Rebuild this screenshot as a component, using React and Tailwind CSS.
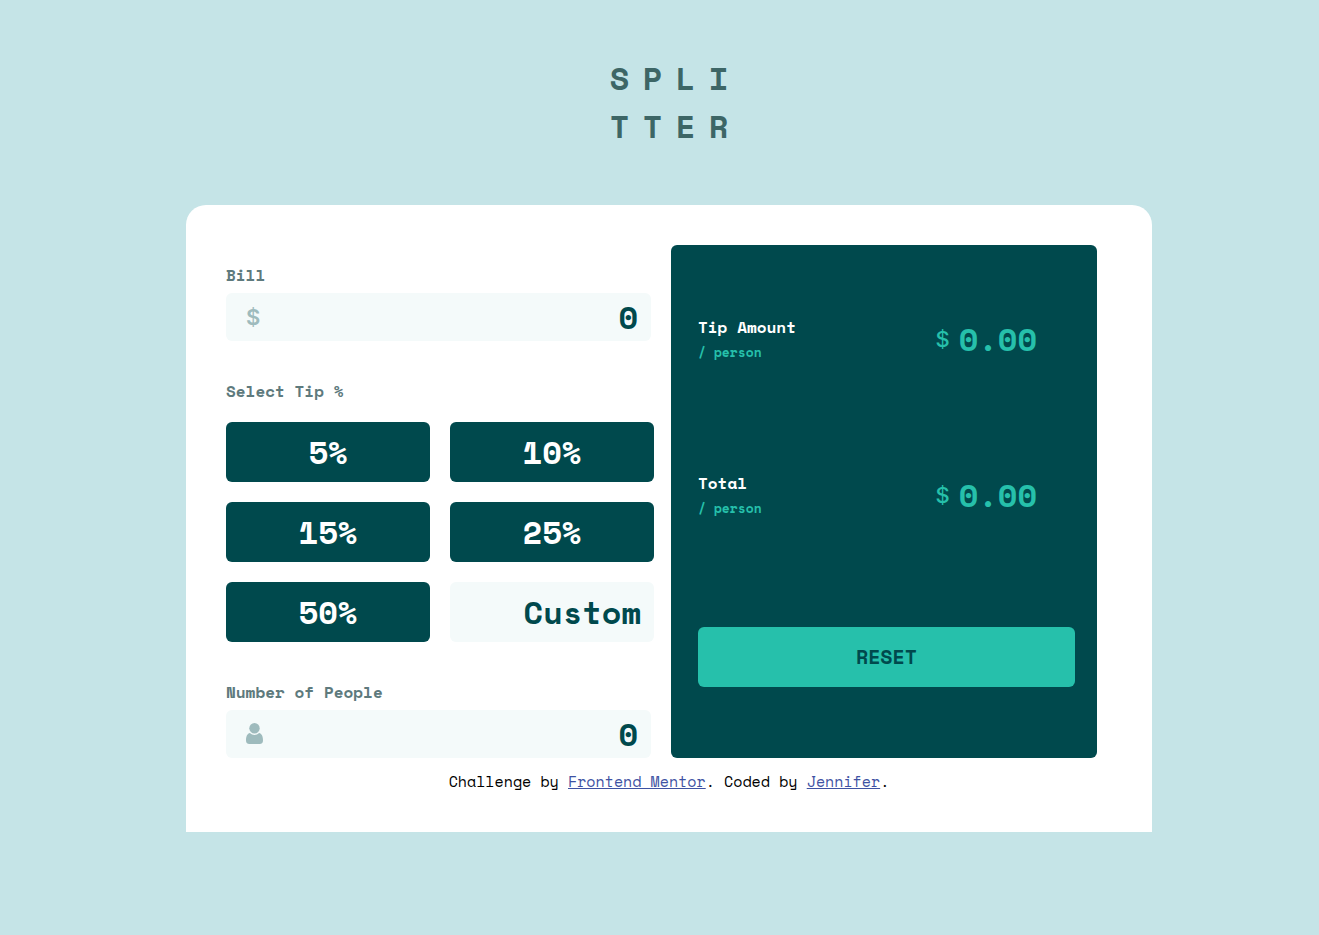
import { useState } from "react";

const TIPS = [5, 10, 15, 25, 50];

function PersonIcon() {
  return (
    <svg viewBox="0 0 17 22" className="h-[22px] w-[17px]" fill="#9ebbbd" aria-hidden="true">
      <circle cx="8.500" cy="5.200" r="5.200" />
      <path d="M3.900 10.100C5.200 11.400 6.800 12 8.500 12s3.300-.6 4.600-1.900C15.600 10.600 17 13.400 17 17.300c0 2.500-1 3.700-3.400 3.700H3.400C1 21 0 19.800 0 17.300c0-3.900 1.400-6.700 3.900-7.200Z" />
    </svg>
  );
}

function AmountField({ id, label, icon, value, onChange }) {
  return (
    <div className="flex flex-col gap-[6px] md:mr-[3px]">
      <label htmlFor={id} className="text-base leading-6 font-bold text-[#5e7a7d]">
        {label}
      </label>
      <div className="flex h-12 items-center rounded-md bg-[#f4fafa] pr-[13px] pl-5">
        {icon}
        <input
          id={id}
          type="text"
          inputMode="decimal"
          value={value}
          onChange={(e) => onChange(e.target.value)}
          className="h-12 min-w-0 flex-1 bg-transparent text-right text-[32px] font-bold text-[#00494d] outline-none"
        />
      </div>
    </div>
  );
}

function ResultRow({ title, amount }) {
  return (
    <div className="flex items-start justify-between pr-[38px]">
      <div>
        <h2 className="text-base leading-6 font-bold text-white">{title}</h2>
        <p className="text-[13px] leading-[27px] font-bold text-[#26c0ab]">/ person</p>
      </div>
      <p className="flex items-center gap-[9px] text-[#26c0ab]">
        <span className="font-['Inter',sans-serif] text-[22px] font-medium">$</span>
        <output className="text-[32px] leading-12 font-bold">{amount.toFixed(2)}</output>
      </p>
    </div>
  );
}

export default function App() {
  const [bill, setBill] = useState("0");
  const [people, setPeople] = useState("0");
  const [tip, setTip] = useState(0);
  const [custom, setCustom] = useState("");

  const count = Number(people) || 0;
  const total = Number(bill) || 0;
  const rate = (Number(custom) || tip) / 100;
  const tipEach = count > 0 ? (total * rate) / count : 0;
  const totalEach = count > 0 ? (total * (1 + rate)) / count : 0;

  const reset = () => {
    setBill("0");
    setPeople("0");
    setTip(0);
    setCustom("");
  };

  return (
    <div className="min-h-screen bg-[#c5e4e7] pt-[54px] pb-[103px] font-['Space_Mono','Liberation_Mono',monospace] md:pl-[19px]">
      <h1 className="mx-auto grid w-[132px] grid-cols-4 text-center text-[32px] leading-12 font-bold text-[#3d6666]">
        {[..."SPLITTER"].map((letter, i) => (
          <span key={i}>{letter}</span>
        ))}
      </h1>

      <main className="mx-auto mt-[55px] w-full max-w-[966px] rounded-t-[20px] bg-white px-6 pt-10 pb-[39px] md:pr-[55px] md:pl-10">
        <div className="grid gap-[17px] md:grid-cols-[428fr_426fr]">
          <section className="flex min-w-0 flex-col gap-[38px] pt-[18px]">
            <AmountField
              id="bill"
              label="Bill"
              value={bill}
              onChange={setBill}
              icon={<span className="font-['Inter',sans-serif] text-[22px] font-semibold text-[#9ebbbd]">$</span>}
            />

            <fieldset className="min-w-0">
              <legend className="text-base leading-6 font-bold text-[#5e7a7d]">Select Tip %</legend>
              <div className="mt-[19px] grid grid-cols-2 gap-5">
                {TIPS.map((value) => (
                  <button
                    key={value}
                    type="button"
                    onClick={() => {
                      setTip(value);
                      setCustom("");
                    }}
                    className="h-[60px] rounded-md bg-[#00494d] text-[32px] font-bold text-white hover:bg-[#26c0ab]"
                  >
                    {value}%
                  </button>
                ))}
                <input
                  type="text"
                  inputMode="decimal"
                  aria-label="Custom tip"
                  placeholder="Custom"
                  value={custom}
                  onChange={(e) => setCustom(e.target.value)}
                  className="h-[60px] w-full min-w-0 rounded-md bg-[#f4fafa] pr-[13px] text-right text-[32px] font-bold text-[#00494d] outline-none placeholder:text-[#00494d]"
                />
              </div>
            </fieldset>

            <AmountField
              id="people"
              label="Number of People"
              value={people}
              onChange={setPeople}
              icon={<PersonIcon />}
            />
          </section>

          <section className="flex min-w-0 flex-col gap-[105px] rounded-md bg-[#00494d] pt-[70px] pr-[22px] pb-[71px] pl-[27px]">
            <ResultRow title="Tip Amount" amount={tipEach} />
            <ResultRow title="Total" amount={totalEach} />
            <button
              type="button"
              onClick={reset}
              className="h-[60px] rounded-md bg-[#26c0ab] text-xl font-bold text-[#00494d]"
            >
              RESET
            </button>
          </section>
        </div>

        <footer className="mt-[11px] text-center text-[15px] leading-6 text-black md:-mr-[15px]">
          Challenge by{" "}
          <a href="https://www.frontendmentor.io" className="text-[#3e52a3] underline">
            Frontend Mentor
          </a>
          . Coded by{" "}
          <a href="#" className="text-[#3e52a3] underline">
            Jennifer
          </a>
          .
        </footer>
      </main>
    </div>
  );
}
